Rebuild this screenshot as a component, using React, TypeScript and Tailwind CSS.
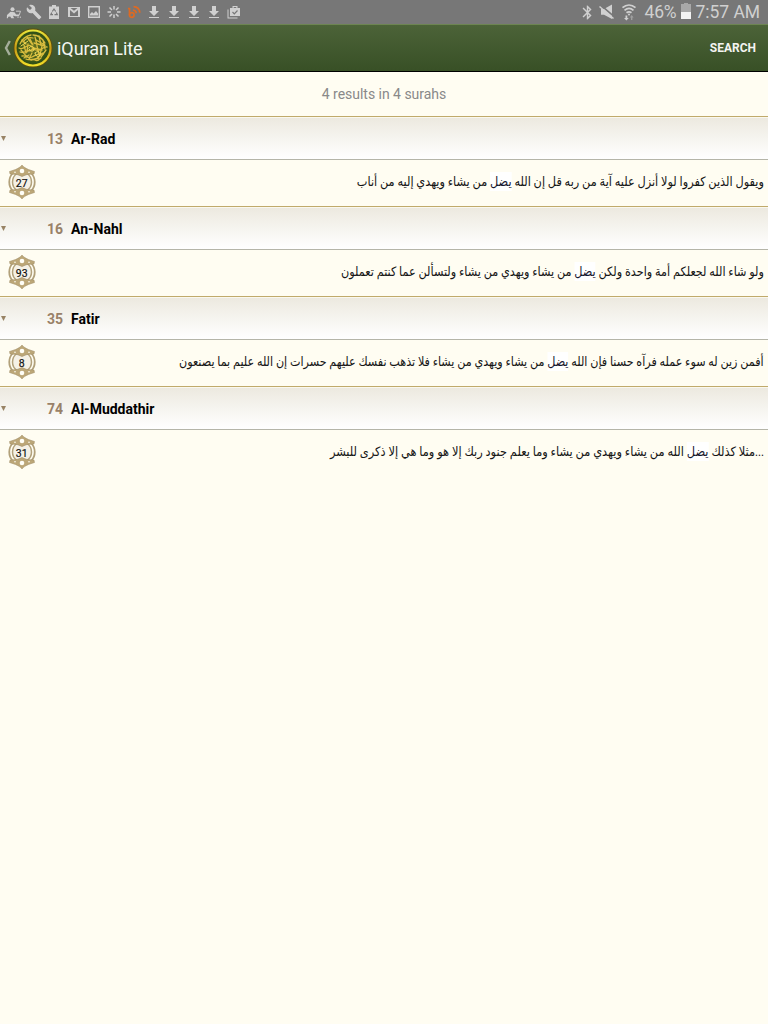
import type { ReactNode } from "react"
import { MdBluetooth, MdBuild } from "react-icons/md"

interface Result {
  number: number
  name: string
  ayah: number
  before: string
  match: string
  after: string
  textClass: string
}

const results: Result[] = [
  {
    number: 13,
    name: "Ar-Rad",
    ayah: 27,
    before: "ويقول الذين كفروا لولا أنزل عليه آية من ربه قل إن الله ",
    match: "يضل",
    after: " من يشاء ويهدي إليه من أناب",
    textClass: "scale-x-[0.870]",
  },
  {
    number: 16,
    name: "An-Nahl",
    ayah: 93,
    before: "ولو شاء الله لجعلكم أمة واحدة ولكن ",
    match: "يضل",
    after: " من يشاء ويهدي من يشاء ولتسألن عما كنتم تعملون",
    textClass: "scale-x-[0.865]",
  },
  {
    number: 35,
    name: "Fatir",
    ayah: 8,
    before: "أفمن زين له سوء عمله فرآه حسنا فإن الله ",
    match: "يضل",
    after: " من يشاء ويهدي من يشاء فلا تذهب نفسك عليهم حسرات إن الله عليم بما يصنعون",
    textClass: "scale-x-[0.859]",
  },
  {
    number: 74,
    name: "Al-Muddathir",
    ayah: 31,
    before: "...مثلا كذلك ",
    match: "يضل",
    after: " الله من يشاء ويهدي من يشاء وما يعلم جنود ربك إلا هو وما هي إلا ذكرى للبشر",
    textClass: "scale-x-[0.877]",
  },
]

function StatusIcon({ children }: { children: ReactNode }) {
  return (
    <svg viewBox="0 0 16 16" className="size-4 shrink-0" fill="#d0d0d0">
      {children}
    </svg>
  )
}

function DownloadIcon() {
  return (
    <StatusIcon>
      <path d="M6 2h4v5h3l-5 5-5-5h3zM3 13h10v1H3z" />
    </StatusIcon>
  )
}

function StatusBar() {
  return (
    <div className="flex h-6 items-center justify-between bg-[#777] pl-1.5 pr-2 text-[#d0d0d0]">
      <div className="flex items-center gap-1">
        <StatusIcon>
          <circle cx="6.500" cy="5.300" r="2" />
          <path d="M1 11L4.500 7.800l4 .4 1.600 2.300h2.900V12.200H9l-1.500-.8-.3 1.200 1 1.600H5.300L4.300 12.500l-2 .2-.5 1.500H.8z" />
          <path d="M10 7.200h4.500l-1.500 4.300M12 12.500v1.500M14.300 12.500v1.500" fill="none" stroke="#d0d0d0" strokeWidth="0.900" />
        </StatusIcon>
        <MdBuild className="size-4 shrink-0" />
        <StatusIcon>
          <path d="M6 1h4v1.500h3V15H3V2.500h3z" />
          <path d="M6.300 7.500L8 5l1.700 2.500M10.300 8.500l1 2.200H8.500M7 10.700H4.800l1-2.200" fill="none" stroke="#777" strokeWidth="1.200" />
        </StatusIcon>
        <StatusIcon>
          <path d="M2 3h12v10H2z" />
          <path d="M4 6v6h8V6L8 9.500zM4.500 4h7L8 6.800z" fill="#777" />
        </StatusIcon>
        <StatusIcon>
          <path fillRule="evenodd" d="M2 2h12v12H2zM3.400 3.400v9.200h9.200V3.400z" />
          <path d="M4 11.500V10l2-2 1.500 1.500L10 7l2 2.500v2z" />
        </StatusIcon>
        <StatusIcon>
          <path d="M8 2v3.500M8 10.500V14M1.500 8H5M11 8h3.500M3.500 3.500L6 6M10 10l2.500 2.500M12.500 3.500L10 6M6 10l-2.500 2.500" stroke="#d0d0d0" strokeWidth="1.500" />
        </StatusIcon>
        <StatusIcon>
          <g fill="none" stroke="#dc6a24" strokeWidth="1.700">
            <path d="M2 4.500h1.500V11" />
            <circle cx="5.800" cy="11" r="2.300" />
            <path d="M7 6c2 .2 3.200 1.500 3.300 3.300" />
            <path d="M7.500 2.700c4 .2 6 2.300 6.300 6" />
          </g>
        </StatusIcon>
        <DownloadIcon />
        <DownloadIcon />
        <DownloadIcon />
        <DownloadIcon />
        <StatusIcon>
          <path d="M1.500 5.500h1v8h9v1h-10z" />
          <path fillRule="evenodd" d="M4 4h2.500V2h5v2H14v8H4zM7.700 3v1h2.600V3z" />
          <path d="M6.500 8l1.800 1.800L11.500 6.500" fill="none" stroke="#777" strokeWidth="1.200" />
        </StatusIcon>
      </div>

      <div className="flex items-center">
        <MdBluetooth className="mr-[3px] size-[17px]" />
        <svg viewBox="0 0 16 16" className="mr-1.5 size-4" fill="#d0d0d0">
          <path d="M2 5h3l8-4.500v14.500L5 10.800H2z" />
          <path d="M1.500 .8l14 12" stroke="#777" strokeWidth="1.600" />
          <path d="M.5 2.500l14 12" stroke="#d0d0d0" strokeWidth="1.500" />
        </svg>
        <svg viewBox="0 0 16 18" className="mr-2 h-[18px] w-4" fill="#d0d0d0">
          <path d="M1.500 4.700c4-3.600 9-3.600 13 0M3.500 7.300c3-2.500 6-2.500 9 0M5.500 9.800c2-1.500 3-1.500 5 0" fill="none" stroke="#d0d0d0" strokeWidth="1.700" />
          <circle cx="8" cy="11.500" r="1" />
          <path d="M4.500 12.500h1.800V15h1.500l-2.400 2.500L3 15h1.500z" />
          <path d="M10 17v-2.500H8.800L10.700 12l1.900 2.500h-1.200V17z" opacity=".45" />
        </svg>
        <span className="w-[36px] whitespace-nowrap text-[17.500px] leading-6 tracking-[-0.2px]">46%</span>
        <svg viewBox="0 0 10 16" className="mb-0.5 mr-[5px] h-4 w-2.5">
          <path d="M3 0h4v1h3v15H0V1h3z" fill="#a8a8a8" />
          <path d="M0 9h10v7H0z" fill="#f3f3f3" />
        </svg>
        <span className="whitespace-nowrap text-[17.500px] leading-6 tracking-[-0.050px]">7:57 AM</span>
      </div>
    </div>
  )
}

function Logo() {
  return (
    <svg viewBox="0 0 40 40" className="size-10">
      <defs>
        <linearGradient id="ring" x1="0" y1="0" x2="0" y2="1">
          <stop offset="0" stopColor="#e9e43a" />
          <stop offset="0.5" stopColor="#c79a16" />
          <stop offset="1" stopColor="#f0df2a" />
        </linearGradient>
        <radialGradient id="disc">
          <stop offset="0" stopColor="#6a7420" />
          <stop offset="1" stopColor="#2a4c16" />
        </radialGradient>
      </defs>
      <circle cx="20" cy="20" r="19.500" fill="#5d4d0c" />
      <circle cx="20" cy="20" r="17.500" fill="url(#disc)" stroke="url(#ring)" strokeWidth="2.200" />
      <g fill="none" stroke="#d9bd3f" strokeWidth="1.300" strokeLinecap="round">
        <path d="M7 16c2-5 6-8 11-9M10 14c3-4 7-5 10-4M20 7c5 0 9 3 12 8M26 8l2 9M30 12l2 9M22 9l2 8M17 11l3 6" />
        <path d="M6 20c5 3 8-5 12-2s-1 6-4 4M7 24c6 2 11-4 16-2s7-4 11-3M9 28c5-1 6 3 10 1s6-4 11-3" />
        <path d="M13 31c3 2 6-1 9 1s4-1 6-2M11 17l2 8M15 16l-1 8M24 18l2 9M29 18l-2 9M19 25l-3 6M33 22l-5 7" />
        <path d="M9 12l4 4M14 9l5 7M23 12l9 5M21 15l11 3M8 22l6 7M18 32l8-2M20 20l9 2M30 25l-7 6M11 30l5-3" />
        <path d="M8 18l7-5M16 20c2-3 5-2 5 1s-4 3-5 0M22 25c3-3 6-1 5 2s-5 1-5-2" stroke="#f2dd59" strokeWidth="1" />
      </g>
    </svg>
  )
}

function AppHeader() {
  return (
    <header className="flex h-12 items-center border-b border-t border-b-black border-t-[#6d8552] bg-linear-to-b from-[#4c6338] to-[#385026]">
      <svg viewBox="0 0 8 16" className="ml-[3px] mr-0.5 h-4 w-2">
        <path d="M6.800 1L3 8l3.800 7" fill="none" stroke="#a5ae9b" strokeWidth="2.400" />
      </svg>
      <Logo />
      <h1 className="ml-1 text-[18px] tracking-[-0.050px] text-[#f4f6f1]">iQuran Lite</h1>
      <button className="ml-auto mr-3 pb-px text-[12px] font-bold text-[#f4f4f1]">SEARCH</button>
    </header>
  )
}

function AyahBadge({ ayah }: { ayah: number }) {
  return (
    <svg viewBox="0 0 28 36" className="mb-0.5 ml-2 h-9 w-7 shrink-0">
      <path d="M4.500 9.500C.2 14 .2 22 4.500 26.500M23.500 9.500c4.300 4.500 4.300 12.500 0 17" fill="none" stroke="#b2a17a" strokeWidth="1.800" />
      <path d="M9 9.500c2 0 3.500.5 5 2 1.500-1.500 3-2 5-2 6 4 6 13 0 17-2 0-3.500-.5-5-2-1.500 1.500-3 2-5 2-6-4-6-13 0-17z" fill="#f5f1e6" stroke="#b3a27b" strokeWidth="1.500" />
      <g fill="#bca778" stroke="#9d8b64" strokeWidth="0.500">
        <path d="M14 1c1.500 2.200 4 3.300 6.500 4.500l6 2-.5 2.500-7 .5L14 12.500 9 10.500 2 10l-.5-2.500 6-2C10 4.300 12.500 3.200 14 1z" />
        <path d="M14 35c1.500-2.200 4-3.300 6.500-4.500l6-2-.5-2.500-7-.5-5-2-5 2-7 .5-.5 2.500 6 2c2.500 1.200 5 2.300 6.500 4.500z" />
      </g>
      <g fill="#fffef7">
        <circle cx="14" cy="7" r="2.300" />
        <circle cx="14" cy="29" r="2.300" />
        <circle cx="7" cy="8.300" r="0.800" />
        <circle cx="21" cy="8.300" r="0.800" />
        <circle cx="7" cy="27.700" r="0.800" />
        <circle cx="21" cy="27.700" r="0.800" />
      </g>
      <text x="13.700" y="22.500" textAnchor="middle" fontSize="10.500" fill="#111" stroke="#111" strokeWidth="0.200">
        {ayah}
      </text>
    </svg>
  )
}

function ResultSection({ result }: { result: Result }) {
  return (
    <section className="h-[90px]">
      <div className="flex h-11 items-center border-y border-b-[#b5b5a8] border-t-[#c0aa6b] bg-linear-to-b from-[#ece9df] to-white pt-0.5 text-[14px] font-bold shadow-[inset_0_1px_0_#faf8ee]">
        <svg viewBox="0 0 6 6" className="mb-0.5 ml-px size-[5px]" fill="#988365">
          <path d="M0 0h6L3 6z" />
        </svg>
        <span className="w-[57px] text-right text-[#998168]">{result.number}</span>
        <h2 className="ml-2 text-black">{result.name}</h2>
      </div>
      <div className="flex h-[46px] items-center justify-between pr-1">
        <AyahBadge ayah={result.ayah} />
        <p
          dir="rtl"
          className={`mb-[3px] origin-right whitespace-nowrap text-[13px] leading-5 text-[#151515] ${result.textClass}`}
        >
          {result.before}
          <mark className="bg-white py-0.5 text-[#17172e]">{result.match}</mark>
          {result.after}
        </p>
      </div>
    </section>
  )
}

export default function App() {
  return (
    <div className="h-screen overflow-hidden bg-[#fffdf2] font-['Roboto','Noto_Sans','DejaVu_Sans',sans-serif]">
      <StatusBar />
      <AppHeader />
      <p className="h-11 text-center text-[14px] leading-[45px] tracking-[-0.020px] text-[#898989]">
        4 results in 4 surahs
      </p>
      {results.map((result) => (
        <ResultSection key={result.number} result={result} />
      ))}
    </div>
  )
}
